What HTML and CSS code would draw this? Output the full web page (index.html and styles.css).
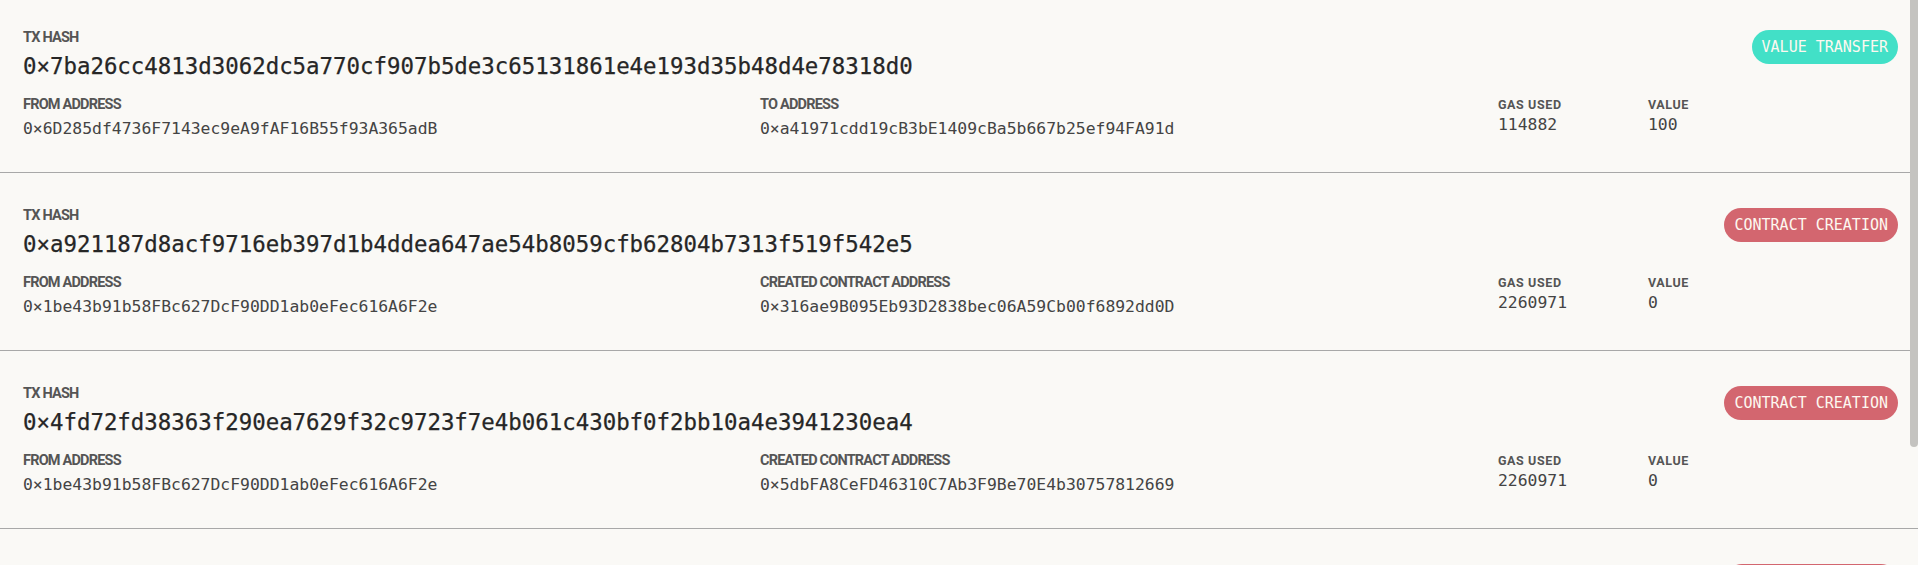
FILE: index.html
```html
<!DOCTYPE html>
<html>
<head>
<meta charset="utf-8">
<link rel="stylesheet" href="styles.css">
</head>
<body>
<div class="tx-list">
  <div class="tx">
    <div class="tx-top">
      <div class="hash-block">
        <div class="label">TX HASH</div>
        <div class="hash">0×7ba26cc4813d3062dc5a770cf907b5de3c65131861e4e193d35b48d4e78318d0</div>
      </div>
      <div class="badge transfer">VALUE TRANSFER</div>
    </div>
    <div class="details">
      <div class="field"><div class="label">FROM ADDRESS</div><div class="addr">0×6D285df4736F7143ec9eA9fAF16B55f93A365adB</div></div>
      <div class="field"><div class="label">TO ADDRESS</div><div class="addr">0×a41971cdd19cB3bE1409cBa5b667b25ef94FA91d</div></div>
      <div class="field"><div class="label spaced">GAS USED</div><div class="num">114882</div></div>
      <div class="field"><div class="label spaced">VALUE</div><div class="num">100</div></div>
    </div>
  </div>
  <div class="tx">
    <div class="tx-top">
      <div class="hash-block">
        <div class="label">TX HASH</div>
        <div class="hash">0×a921187d8acf9716eb397d1b4ddea647ae54b8059cfb62804b7313f519f542e5</div>
      </div>
      <div class="badge creation">CONTRACT CREATION</div>
    </div>
    <div class="details">
      <div class="field"><div class="label">FROM ADDRESS</div><div class="addr">0×1be43b91b58FBc627DcF90DD1ab0eFec616A6F2e</div></div>
      <div class="field"><div class="label">CREATED CONTRACT ADDRESS</div><div class="addr">0×316ae9B095Eb93D2838bec06A59Cb00f6892dd0D</div></div>
      <div class="field"><div class="label spaced">GAS USED</div><div class="num">2260971</div></div>
      <div class="field"><div class="label spaced">VALUE</div><div class="num">0</div></div>
    </div>
  </div>
  <div class="tx">
    <div class="tx-top">
      <div class="hash-block">
        <div class="label">TX HASH</div>
        <div class="hash">0×4fd72fd38363f290ea7629f32c9723f7e4b061c430bf0f2bb10a4e3941230ea4</div>
      </div>
      <div class="badge creation">CONTRACT CREATION</div>
    </div>
    <div class="details">
      <div class="field"><div class="label">FROM ADDRESS</div><div class="addr">0×1be43b91b58FBc627DcF90DD1ab0eFec616A6F2e</div></div>
      <div class="field"><div class="label">CREATED CONTRACT ADDRESS</div><div class="addr">0×5dbFA8CeFD46310C7Ab3F9Be70E4b30757812669</div></div>
      <div class="field"><div class="label spaced">GAS USED</div><div class="num">2260971</div></div>
      <div class="field"><div class="label spaced">VALUE</div><div class="num">0</div></div>
    </div>
  </div>
  <div class="tx">
    <div class="tx-top">
      <div class="hash-block"></div>
      <div class="badge creation pill" aria-hidden="true"></div>
    </div>
  </div>
</div>
<div class="scroll-thumb"></div>
</body>
</html>
```
FILE: styles.css
```css
html, body {
  margin: 0;
  padding: 0;
  background: #faf9f6;
  height: 565px;
  overflow: hidden;
}

body {
  position: relative;
  font-family: "DejaVu Sans Mono", monospace;
}

.tx-list {
  margin-top: -5px;
}

.tx {
  padding: 34px 20px 33px 23px;
  border-bottom: 1px solid #a8a8a8;
  box-sizing: border-box;
  height: 178px;
}

.tx-top {
  display: flex;
  justify-content: space-between;
  align-items: flex-start;
}

.label {
  font-family: Roboto, "Liberation Sans", sans-serif;
  font-weight: 700;
  font-size: 14.5px;
  line-height: 18px;
  letter-spacing: -0.8px;
  color: #555;
}

.label.spaced {
  font-size: 12.5px;
  letter-spacing: 0.6px;
}

.hash {
  margin-top: 5px;
  font-family: "DejaVu Sans Mono", monospace;
  font-size: 22.4px;
  line-height: 28px;
  color: #262626;
  -webkit-text-stroke: 0.25px #262626;
}

.badge {
  margin-top: 1px;
  height: 34px;
  line-height: 34px;
  padding: 0 10px;
  border-radius: 17px;
  font-family: "DejaVu Sans Mono", monospace;
  font-size: 15px;
  color: #fdf8f0;
  white-space: nowrap;
}

.badge.pill {
  width: 153px;
}

.badge.transfer {
  background: #42e0c7;
}

.badge.creation {
  background: #d3666f;
}

.details {
  margin-top: 16px;
  display: grid;
  grid-template-columns: 737px 738px 150px 1fr;
}

.addr {
  margin-top: 4.5px;
  font-size: 16.4px;
  line-height: 20px;
  color: #444;
}

.num {
  margin-top: 0.5px;
  font-size: 16.4px;
  line-height: 20px;
  color: #444;
}

.scroll-thumb {
  position: absolute;
  top: 0;
  right: 0;
  width: 8px;
  height: 447px;
  background: #c4c3c0;
  border-radius: 0 0 4px 4px;
}
```
